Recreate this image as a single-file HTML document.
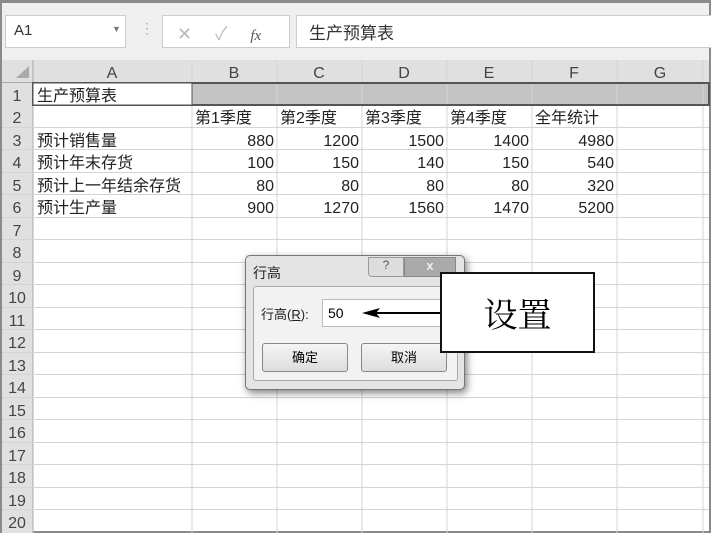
<!DOCTYPE html><html><head><style>
body{margin:0;width:711px;height:533px;overflow:hidden;background:#fff;font-family:"Liberation Sans","Noto Sans CJK SC",sans-serif;position:relative}
.a{position:absolute;box-sizing:border-box}
</style></head><body>
<div class="a" style="left:0;top:0;width:711px;height:533px;border:2px solid #8a8a8a;border-top:3px solid #8a8a8a"></div>
<div class="a" style="left:2px;top:3px;width:707px;height:57px;background:#efefef"></div>
<div class="a" style="left:5px;top:15px;width:121px;height:33px;background:#fff;border:1px solid #ccc;font-size:15px;padding:6px 8px;color:#333">A1<span style="position:absolute;left:106px;top:8px;font-size:9px;color:#777">▼</span></div>
<div class="a" style="left:140px;top:20px;color:#aaa;font-size:14px">⋮</div>
<div class="a" style="left:162px;top:15px;width:128px;height:33px;background:#fff;border:1px solid #ccc;color:#bbb;font-size:18px;padding:4px 0 0 14px;word-spacing:18px">✕ ✓ <i style="font-family:'Liberation Serif';color:#555;font-size:15px">fx</i></div>
<div class="a" style="left:296px;top:15px;width:420px;height:33px;background:#fff;border:1px solid #ccc;font-size:17px;padding:3px 12px;color:#333">生产预算表</div>
<svg class="a" style="left:0;top:60px" width="711" height="473">
<rect x="2" y="0" width="707" height="22" fill="#e0e0e0"/>
<rect x="2" y="22" width="31" height="451" fill="#e0e0e0"/>
<rect x="192" y="23" width="517" height="22" fill="#c4c4c4"/>
<polygon points="16,18 29,18 29,6" fill="#aaa"/>
<g stroke="#d4d4d4" stroke-width="1">
<line x1="33" y1="0" x2="33" y2="473" stroke="#aaa"/>
<line x1="192" y1="0" x2="192" y2="473"/><line x1="277" y1="0" x2="277" y2="473"/><line x1="362" y1="0" x2="362" y2="473"/><line x1="447" y1="0" x2="447" y2="473"/><line x1="532" y1="0" x2="532" y2="473"/><line x1="617" y1="0" x2="617" y2="473"/><line x1="703" y1="0" x2="703" y2="473"/>
</g>
<g stroke="#d4d4d4">
<line x1="2" y1="22.5" x2="709" y2="22.5" stroke="#aaa"/>
<line x1="2" y1="67.5" x2="709" y2="67.5"/><line x1="2" y1="89.5" x2="709" y2="89.5"/><line x1="2" y1="112.5" x2="709" y2="112.5"/><line x1="2" y1="134.5" x2="709" y2="134.5"/><line x1="2" y1="157.5" x2="709" y2="157.5"/><line x1="2" y1="179.5" x2="709" y2="179.5"/><line x1="2" y1="202.5" x2="709" y2="202.5"/><line x1="2" y1="224.5" x2="709" y2="224.5"/><line x1="2" y1="247.5" x2="709" y2="247.5"/><line x1="2" y1="269.5" x2="709" y2="269.5"/><line x1="2" y1="292.5" x2="709" y2="292.5"/><line x1="2" y1="314.5" x2="709" y2="314.5"/><line x1="2" y1="337.5" x2="709" y2="337.5"/><line x1="2" y1="359.5" x2="709" y2="359.5"/><line x1="2" y1="382.5" x2="709" y2="382.5"/><line x1="2" y1="404.5" x2="709" y2="404.5"/><line x1="2" y1="427.5" x2="709" y2="427.5"/><line x1="2" y1="449.5" x2="709" y2="449.5"/>
</g>
<rect x="33" y="23" width="676" height="22" fill="none" stroke="#555" stroke-width="2"/>
<rect x="33" y="23" width="159" height="22" fill="#fff" stroke="#555" stroke-width="1"/>
<g font-family="Liberation Sans,Noto Sans CJK SC,sans-serif" font-size="16" fill="#444" text-anchor="middle">
<text x="112" y="18">A</text><text x="234" y="18">B</text><text x="319" y="18">C</text><text x="404" y="18">D</text><text x="489" y="18">E</text><text x="574" y="18">F</text><text x="660" y="18">G</text>
<text x="17" y="41">1</text><text x="17" y="63">2</text><text x="17" y="86">3</text><text x="17" y="108">4</text><text x="17" y="131">5</text><text x="17" y="153">6</text><text x="17" y="176">7</text><text x="17" y="198">8</text><text x="17" y="221">9</text><text x="17" y="243">10</text><text x="17" y="266">11</text><text x="17" y="288">12</text><text x="17" y="311">13</text><text x="17" y="333">14</text><text x="17" y="356">15</text><text x="17" y="378">16</text><text x="17" y="401">17</text><text x="17" y="423">18</text><text x="17" y="446">19</text><text x="17" y="468">20</text>
</g>
<g font-family="Liberation Sans,Noto Sans CJK SC,sans-serif" font-size="16" fill="#222">
<text x="37" y="41">生产预算表</text>
<text x="195" y="63">第1季度</text><text x="280" y="63">第2季度</text><text x="365" y="63">第3季度</text><text x="450" y="63">第4季度</text><text x="535" y="63">全年统计</text>
<text x="37" y="86">预计销售量</text><text x="37" y="108">预计年末存货</text><text x="37" y="131">预计上一年结余存货</text><text x="37" y="153">预计生产量</text>
</g>
<g font-family="Liberation Sans,sans-serif" font-size="16" fill="#222" text-anchor="end">
<text x="274" y="86">880</text><text x="359" y="86">1200</text><text x="444" y="86">1500</text><text x="529" y="86">1400</text><text x="614" y="86">4980</text>
<text x="274" y="108">100</text><text x="359" y="108">150</text><text x="444" y="108">140</text><text x="529" y="108">150</text><text x="614" y="108">540</text>
<text x="274" y="131">80</text><text x="359" y="131">80</text><text x="444" y="131">80</text><text x="529" y="131">80</text><text x="614" y="131">320</text>
<text x="274" y="153">900</text><text x="359" y="153">1270</text><text x="444" y="153">1560</text><text x="529" y="153">1470</text><text x="614" y="153">5200</text>
</g>
</svg>
<div class="a" style="left:245px;top:255px;width:220px;height:135px;background:#e4e4e4;border:1px solid #777;border-radius:5px;box-shadow:2px 3px 8px rgba(0,0,0,.5)"></div>
<div class="a" style="left:253px;top:263px;font-size:14px;color:#222">行高</div>
<div class="a" style="left:368px;top:257px;width:36px;height:20px;background:#ddd;border:1px solid #999;border-radius:0 0 0 4px;text-align:center;font-size:12px;color:#555">?</div>
<div class="a" style="left:404px;top:257px;width:52px;height:20px;background:#aaa;border:1px solid #888;border-radius:0 0 4px 0;text-align:center;font-size:13px;font-weight:bold;color:#eee">x</div>
<div class="a" style="left:253px;top:286px;width:205px;height:95px;background:#f2f2f2;border:1px solid #aaa;border-radius:3px"></div>
<div class="a" style="left:261px;top:304px;font-size:13px;color:#222">行高(<u>R</u>):</div>
<div class="a" style="left:322px;top:299px;width:120px;height:28px;background:#fff;border:1px solid #bbb;font-size:14px;padding:5px 5px">50</div>
<div class="a" style="left:262px;top:343px;width:86px;height:29px;background:linear-gradient(#f5f5f5,#ddd);border:1px solid #888;border-radius:3px;text-align:center;font-size:13px;line-height:27px">确定</div>
<div class="a" style="left:361px;top:343px;width:86px;height:29px;background:linear-gradient(#f5f5f5,#ddd);border:1px solid #888;border-radius:3px;text-align:center;font-size:13px;line-height:27px">取消</div>
<svg class="a" style="left:360px;top:306px" width="84" height="14"><line x1="10" y1="7" x2="84" y2="7" stroke="#000" stroke-width="2"/><polygon points="2,7 20,2 16,7 20,12" fill="#000"/></svg>
<div class="a" style="left:440px;top:272px;width:155px;height:81px;background:#fff;border:2px solid #111;font-family:'Noto Serif CJK SC',serif;font-size:34px;text-align:center;line-height:77px">设置</div>
</body></html>
